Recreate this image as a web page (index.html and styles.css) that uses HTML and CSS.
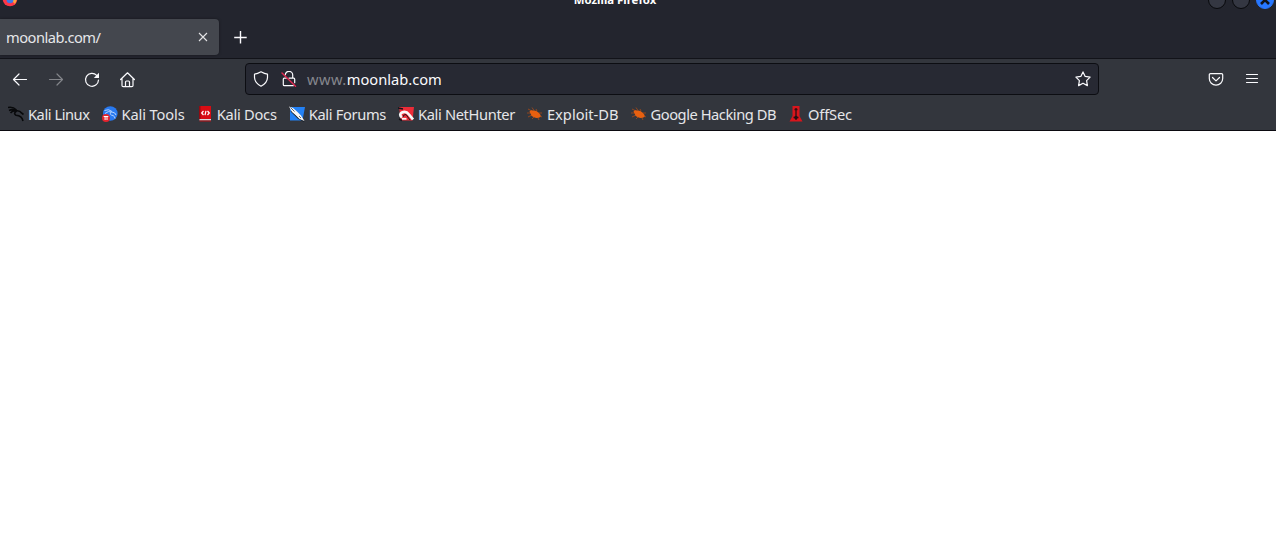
FILE: index.html
```
<!DOCTYPE html>
<html lang="en">
<head>
  <meta charset="UTF-8" />
  <title>Mozilla Firefox</title>
  <link rel="stylesheet" href="styles.css">
</head>
<body>

  <!-- shared bookmark icons -->
  <svg class="sprite" aria-hidden="true">
    <symbol id="bug" viewBox="0 0 16 16">
      <path d="M1 3l4 2M5 1.500l2 3M9 3l1 2M0 7h4M1 11l4-2M5 13l2-2M12 7l3 0M11 12l1 2M13 10l2 1" stroke="#a84a18" stroke-width=".8" fill="none"/>
      <path d="M2.500 5.500Q4 3.500 6 4.500Q9 4 11.500 6.500Q14 8.500 13.500 11Q10 13 7 11.300Q4 10.500 3.800 8Z" fill="#e8600f"/>
    </symbol>
    <symbol id="dragon" viewBox="0 0 16 16">
      <path d="M0 1.500Q5 .5 8.500 4M1 4.500Q5 2.500 8.500 5M2.500 7Q5 4 8.500 4.800Q12 4.500 13.500 7L15.500 8.500M8.500 5Q5 7.500 8 9.200Q14 9.500 15 15" fill="none" stroke="currentColor" stroke-width="1.600"/>
    </symbol>
  </svg>

  <header class="browser">
    <div class="titlebar">
      <svg class="app-icon" width="16" height="16" viewBox="0 0 16 16">
        <circle cx="8" cy="8" r="7.300" fill="#ff3647"/>
        <path d="M11 1l3 2q2 5-1 10l-2-2z" fill="#ffa23d"/>
        <circle cx="8" cy="8.800" r="3.400" fill="#3d78e8"/>
      </svg>
      <span class="window-title">Mozilla Firefox</span>
      <div class="window-controls">
        <span class="control"></span>
        <span class="control"></span>
        <span class="control control-close">
          <svg width="10" height="10" viewBox="0 0 10 10"><path d="M1 1l8 8M9 1l-8 8" stroke="#10131a" stroke-width="2.600"/></svg>
        </span>
      </div>
    </div>

    <div class="tabs">
      <div class="tab">
        <span class="tab-label">moonlab.com/</span>
        <svg width="16" height="16" viewBox="0 0 16 16"><path d="M4 4l8 8M12 4l-8 8" stroke="#e4e4e6" stroke-width="1.100"/></svg>
      </div>
      <svg class="new-tab" width="16" height="16" viewBox="0 0 16 16"><path d="M8.500 2v12.500M2.200 8.500h12.500" stroke="#fbfbfe" stroke-width="1.400"/></svg>
    </div>

    <nav class="navbar">
      <div class="nav-buttons">
        <svg class="icon" viewBox="0 0 16 16"><path d="M14.500 7.500H1.500M7 2L1.500 7.500L7 13"/></svg>
        <svg class="icon disabled" viewBox="0 0 16 16"><path d="M1.500 7.500h13M9 2L14.500 7.500L9 13"/></svg>
        <svg class="icon" viewBox="0 0 16 16"><path d="M12.700 3.300A6.500 6.500 0 1 0 14.500 8"/><path d="M15 .8v5.200h-5.200z" fill="#fbfbfe" stroke="none"/></svg>
        <svg class="icon" viewBox="0 0 16 16"><path d="M.6 7.500L7.500 .8l6.900 6.700M2 6.500v7q0 1.200 1.200 1.200h8.600q1.200 0 1.200-1.200v-7M5.500 14.500V10q0-1 1-1h2q1 0 1 1v4.500"/></svg>
      </div>
      <div class="urlbar">
        <svg class="icon" viewBox="0 0 16 16"><path d="M8 .8Q11.500 2.800 14.500 3.200V6.500Q14.300 12 8 15.200Q1.700 12 1.500 6.500V3.200Q4.500 2.800 8 .8z"/></svg>
        <svg class="icon" viewBox="0 0 16 16"><path d="M4.300 3.800a3.700 3.700 0 0 1 7.400 .5V7M8 7.200h4.700q1 0 1 1v3.500M2.300 8v5.700q0 1 1 1h9M2.300 8.200q0-1 1-1h2"/><path d="M1 2L14.500 15.300" stroke="#e22850" stroke-width="1.400"/></svg>
        <span class="url"><span class="dim">www.</span>moonlab.com</span>
        <svg class="icon star" viewBox="0 0 16 16"><path d="M8 .9l2.200 4.500 4.900.7-3.500 3.500.8 5L8 12.200l-4.400 2.400.8-5L.9 6.100l4.900-.7z"/></svg>
      </div>
      <div class="nav-menu">
        <svg class="icon" viewBox="0 0 16 16"><path d="M2.500 1.600h11q1.200 0 1.200 1.200V6.500A6.700 6.700 0 0 1 1.300 6.500V2.800Q1.300 1.600 2.500 1.600zM4.500 5.500L8 8.900l3.500-3.400"/></svg>
        <svg class="icon" viewBox="0 0 16 16"><path d="M2.500 2.500h11M2.500 6.500h11M2.500 10.500h11"/></svg>
      </div>
    </nav>

    <div class="bookmarks">
      <a class="bookmark kali-linux"><svg class="dragon"><use href="#dragon"/></svg><span>Kali Linux</span></a>
      <a class="bookmark kali-tools">
        <svg viewBox="0 0 16 16">
          <circle cx="8.300" cy="7.500" r="7.300" fill="#2879f0"/>
          <path d="M2.500 4.500Q7 2.500 10 5.500M3 7.500Q6 4.500 10 6Q13.500 6.500 14 9M9 6q-2 3 2 3.500q2 1 2 3" stroke="#b5d4ff" fill="none"/>
          <circle cx="4" cy="12" r="4" fill="#e3242d"/>
          <path d="M1.700 10.500h4.600M3.100 10.500v3.500M5 10.500v3.500" stroke="#fff"/>
        </svg>
        <span>Kali Tools</span>
      </a>
      <a class="bookmark kali-docs">
        <svg viewBox="0 0 16 16">
          <path d="M2 0h12v13H2z" fill="#d80c13"/>
          <path d="M2 0h1.500v13.500H2z" fill="#920b12"/>
          <path d="M2.500 13H14v1.500H2.500z" fill="#d9dadd"/>
          <path d="M2.500 15h11.500" stroke="#bb0c13"/>
          <path d="M6.500 5L4.700 7l1.800 2M10.500 5l1.800 2-1.800 2M9 4.800L8 9.200" fill="none" stroke="#fff" stroke-width="1.200"/>
        </svg>
        <span>Kali Docs</span>
      </a>
      <a class="bookmark kali-forums">
        <svg viewBox="0 0 16 16">
          <path d="M1 1h15l-2.500 13.500H1z" fill="#2381f5"/>
          <path d="M2 5l7 7 6 3.500" stroke="#18202a" stroke-width="1.200" fill="none"/>
          <path d="M0 .5l4 1.500 4 3.500 4 4 3.500 5.500-5-2-4-4-3.500-3z" fill="#f7f7f7"/>
          <path d="M1.500 1.500l4 4M10 10l2 2" stroke="#3a424d" stroke-width=".8" fill="none"/>
        </svg>
        <span>Kali Forums</span>
      </a>
      <a class="bookmark kali-nethunter">
        <svg viewBox="0 0 16 16">
          <path d="M1 1h15l-1.500 13.500H3z" fill="#ec2c38"/>
          <path d="M0 2l5 1M1 13l3 1.500" stroke="#15151a" stroke-width="1.500"/>
          <path d="M4 11.500Q.5 8.500 4 6.500Q8 4.500 11 8.500L15 13.500" fill="none" stroke="#f8f8f8" stroke-width="2.700"/>
          <path d="M4 12.800h4.500" stroke="#f8f8f8" stroke-width="1.800"/>
          <path d="M5 11Q5 8.500 8 8.500L12 14" stroke="#25151a" fill="none"/>
        </svg>
        <span>Kali NetHunter</span>
      </a>
      <a class="bookmark exploit-db"><svg><use href="#bug"/></svg><span>Exploit-DB</span></a>
      <a class="bookmark google-db"><svg><use href="#bug"/></svg><span>Google Hacking DB</span></a>
      <a class="bookmark offsec">
        <svg viewBox="0 0 16 16">
          <path d="M4.500 0h7v10l3 5.500h-13l3-5.500z" fill="#d8151c"/>
          <path d="M8 2v12" stroke="#401014" stroke-width="1.500"/>
          <path d="M6.500 3.500h3M5.500 11.500h5" stroke="#301014" stroke-width="1.300"/>
          <circle cx="8" cy="11.500" r="1.700" fill="#211014"/>
        </svg>
        <span>OffSec</span>
      </a>
    </div>
  </header>

  <main class="page"></main>

</body>
</html>
```
FILE: styles.css
```
* {
  box-sizing: border-box;
}

body {
  margin: 0;
  height: 100vh;
  overflow: hidden;
  display: flex;
  flex-direction: column;
  background: #fff;
  color: #e6e6e9;
  font-family: "Noto Sans", sans-serif;
  font-size: 14.67px;
}

svg {
  display: block;
  flex: none;
}

.sprite {
  position: absolute;
  width: 0;
  height: 0;
}

.browser {
  height: 131px;
  background: #33363d;
  border-bottom: 1px solid #0b0a10;
}

.titlebar {
  display: grid;
  grid-template-columns: 1fr auto 1fr;
  height: 19px;
  padding: 0 2px;
  background: #23252e;
}

.app-icon {
  margin-top: -9px;
}

.window-title {
  margin-top: -9px;
  margin-left: -46px;
  color: #fff;
  font-size: 11.4px;
  font-weight: 700;
  line-height: 18px;
}

.window-controls {
  display: flex;
  justify-content: flex-end;
  gap: 6px;
  margin-top: -9px;
}

.control {
  width: 18px;
  height: 18px;
  border: 1px solid #08090c;
  border-radius: 50%;
  background: #343742;
}

.control-close {
  display: flex;
  align-items: center;
  justify-content: center;
  background: #2777ff;
  border-color: #2777ff;
}

.tabs {
  display: flex;
  height: 40px;
  background: #23252e;
  border-bottom: 1px solid #121319;
}

.tab {
  display: flex;
  align-items: center;
  justify-content: space-between;
  width: 219px;
  height: 36px;
  padding: 0 8px 0 6px;
  border-radius: 0 4px 4px 0;
  background: #44474e;
  box-shadow: 0 0 3px rgba(0, 0, 0, 0.4);
}

.tab-label {
  letter-spacing: -0.5px;
}

.new-tab {
  margin: 10px 0 0 13px;
}

.navbar {
  display: flex;
  align-items: center;
  height: 40px;
}

.nav-buttons {
  display: flex;
  gap: 20px;
  width: 245px;
  padding: 1px 0 0 12px;
}

.icon {
  width: 16px;
  height: 16px;
  fill: none;
  stroke: #fbfbfe;
  stroke-width: 1.2;
  stroke-linecap: round;
  stroke-linejoin: round;
}

.disabled {
  opacity: 0.4;
}

.urlbar {
  display: flex;
  align-items: center;
  gap: 12px;
  width: 854px;
  height: 32px;
  padding: 0 7px;
  border: 1px solid #0c0d12;
  border-radius: 4px;
  background: #272933;
}

.url {
  margin-left: -2px;
  color: #fbfbfe;
}

.dim {
  color: #85868d;
  letter-spacing: 0.45px;
}

.star {
  margin-left: auto;
}

.nav-menu {
  display: flex;
  gap: 20px;
  margin-left: auto;
  padding: 2px 16px 0 0;
}

.bookmarks {
  display: flex;
  gap: 12px;
  height: 30px;
  padding-left: 8px;
}

.bookmark {
  display: flex;
  align-items: center;
  gap: 4px;
  white-space: nowrap;
}

.bookmark svg {
  width: 16px;
  height: 16px;
}

.dragon {
  color: #08090b;
}

.kali-linux {
  letter-spacing: -0.45px;
}

.kali-tools {
  letter-spacing: -0.12px;
}

.kali-docs {
  letter-spacing: -0.25px;
}

.kali-forums {
  letter-spacing: -0.33px;
}

.kali-nethunter {
  letter-spacing: -0.36px;
}

.google-db {
  letter-spacing: -0.45px;
}

.offsec {
  letter-spacing: -0.15px;
}

.page {
  flex: 1;
}
```
